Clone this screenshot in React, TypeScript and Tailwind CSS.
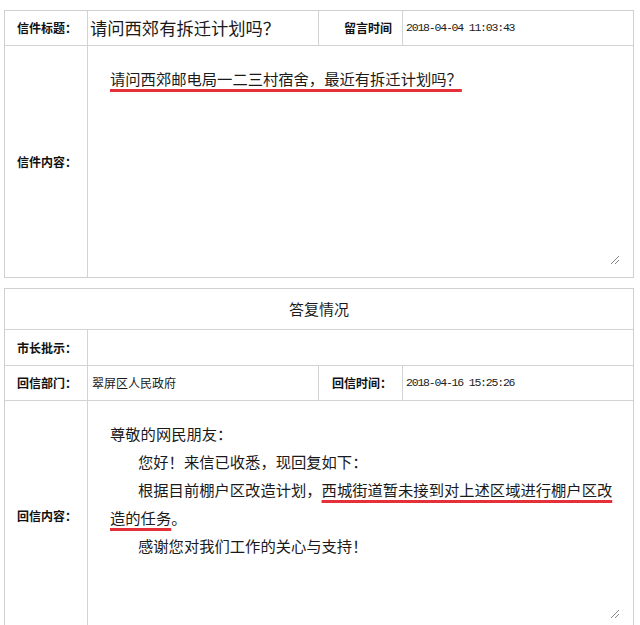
import React from 'react';

const font = { fontFamily: '"Noto Sans CJK SC", "Liberation Sans", sans-serif' };

function ResizeGrip() {
  // little textarea drag corner
  return (
    <svg width="10" height="10" viewBox="0 0 10 10" className="absolute right-[13px] bottom-[12px]">
      <path d="M9 1 L1 9 M9 5 L5 9" stroke="#8a8a8a" strokeWidth="1" />
    </svg>
  );
}

function Label({ children, className = '' }: { children: React.ReactNode; className?: string }) {
  return (
    <div className={`flex items-center justify-end pr-[10px] border-r border-[#d3d3d3] text-[12px] font-bold text-[#111] ${className}`}>
      {children}
    </div>
  );
}

function DateText({ children }: { children: string }) {
  return (
    <div
      className="flex items-center pl-[3px] text-[11.5px] tracking-[-1.2px] text-[#222]"
      style={{ fontFamily: '"Liberation Mono", monospace' }}
    >
      {children}
    </div>
  );
}

const mark = 'underline decoration-[#e5303a] decoration-[3px] underline-offset-[4px]';

export default function App() {
  return (
    <div className="w-[640px] h-[625px] overflow-hidden bg-white pt-[10px] pl-[4px] text-[#1a1a1a]" style={font}>
      {/* 来信 */}
      <div className="w-[630px] border border-[#d0d0d0]">
        <div className="grid grid-cols-[83px_231px_84px_1fr] h-[35px] border-b border-[#d3d3d3]">
          <Label>信件标题：</Label>
          <div className="flex items-center pl-[2px] text-[17.3px] border-r border-[#d3d3d3]">请问西郊有拆迁计划吗？</div>
          <Label className="pr-[5px]">留言时间</Label>
          <DateText>2018-04-04 11:03:43</DateText>
        </div>
        <div className="grid grid-cols-[83px_1fr] h-[231px]">
          <Label>信件内容：</Label>
          <div className="relative pt-[18px] pl-[22px] text-[15.3px] leading-[28px]">
            <span className={mark}>请问西郊邮电局一二三村宿舍，最近有拆迁计划吗？</span>
            <ResizeGrip />
          </div>
        </div>
      </div>

      {/* 答复 */}
      <div className="mt-[10px] w-[630px] border border-[#d0d0d0] border-b-0">
        <div className="h-[41px] flex items-center justify-center text-[15px] border-b border-[#d3d3d3]">答复情况</div>
        <div className="grid grid-cols-[83px_1fr] h-[36px] border-b border-[#d3d3d3]">
          <Label>市长批示：</Label>
          <div />
        </div>
        <div className="grid grid-cols-[83px_231px_84px_1fr] h-[35px] border-b border-[#d3d3d3]">
          <Label>回信部门：</Label>
          <div className="flex items-center pl-[4px] text-[12px] border-r border-[#d3d3d3]">翠屏区人民政府</div>
          <Label className="pr-[5px]">回信时间：</Label>
          <DateText>2018-04-16 15:25:26</DateText>
        </div>
        <div className="grid grid-cols-[83px_1fr] h-[230px]">
          <Label>回信内容：</Label>
          <div className="relative pt-[18px] pl-[22px] pr-[8px] text-[15.3px] leading-[28px]">
            <div>尊敬的网民朋友：</div>
            <div className="pl-[28px]">您好！来信已收悉，现回复如下：</div>
            <div className="pl-[28px] whitespace-nowrap">
              根据目前棚户区改造计划，<span className={mark}>西城街道暂未接到对上述区域进行棚户区改</span>
            </div>
            <div>
              <span className={mark}>造的任务</span>。
            </div>
            <div className="pl-[28px]">感谢您对我们工作的关心与支持！</div>
            <ResizeGrip />
          </div>
        </div>
      </div>
    </div>
  );
}
